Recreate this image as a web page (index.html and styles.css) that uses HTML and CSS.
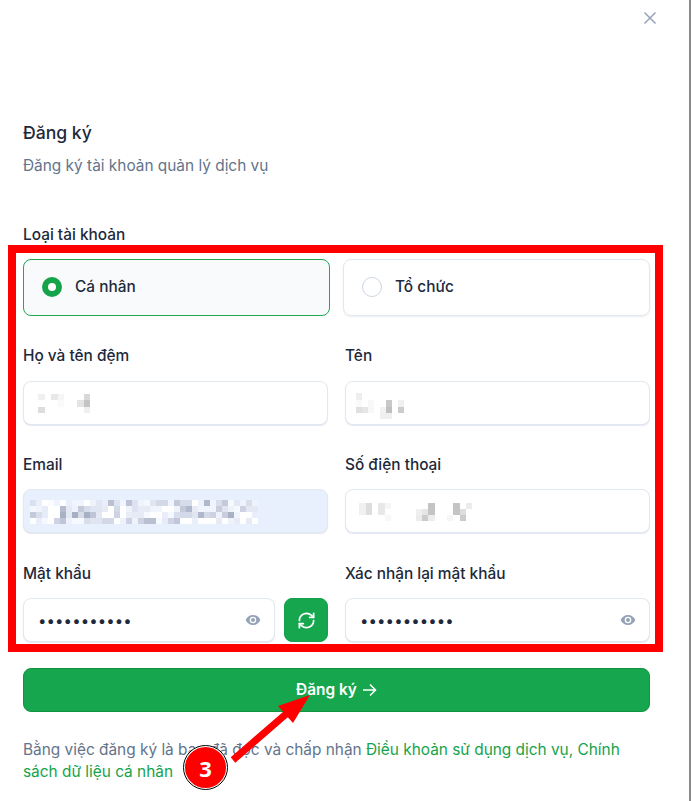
FILE: index.html
```html
<!DOCTYPE html>
<html lang="vi">
<head>
<meta charset="utf-8">
<title>Đăng ký</title>
<link rel="stylesheet" href="styles.css">
</head>
<body>
<main class="sheet">
  <button class="close" type="button" aria-label="Đóng">
    <svg width="16" height="16" viewBox="0 0 16 16"><path d="M2.5 2.500l11 11M13.500 2.500l-11 11" stroke="#94a3b8" stroke-width="1.500" fill="none"/></svg>
  </button>
  <h1 class="title">Đăng ký</h1>
  <p class="subtitle">Đăng ký tài khoản quản lý dịch vụ</p>
  <div class="label type-label">Loại tài khoản</div>
  <div class="choices">
    <div class="choice selected"><span class="radio on"></span>Cá nhân</div>
    <div class="choice"><span class="radio"></span>Tổ chức</div>
  </div>
  <div class="fields">
    <div class="field">
      <div class="label">Họ và tên đệm</div>
      <div class="input">
        <svg class="blur" width="52" height="19" viewBox="0 0 52 19" shape-rendering="crispEdges"><rect x="0" y="0" width="7" height="6" fill="#f0f0f0"/><rect x="13" y="0" width="7" height="6" fill="#e8e8e8"/><rect x="20" y="0" width="6" height="6" fill="#f6f6f6"/><rect x="46" y="0" width="6" height="6" fill="#d8d8d8"/><rect x="20" y="6" width="6" height="7" fill="#fafafa"/><rect x="39" y="6" width="7" height="7" fill="#e4e4e4"/><rect x="46" y="6" width="6" height="7" fill="#c4c4c4"/><rect x="0" y="13" width="7" height="6" fill="#dedede"/><rect x="46" y="13" width="6" height="6" fill="#f0f0f0"/></svg>
      </div>
    </div>
    <div class="field">
      <div class="label">Tên</div>
      <div class="input">
        <svg class="blur blur-name" width="48" height="26" viewBox="0 0 48 26" shape-rendering="crispEdges"><rect x="0" y="0" width="6" height="7" fill="#eeeeee"/><rect x="0" y="7" width="6" height="7" fill="#fafafa"/><rect x="12" y="7" width="6" height="7" fill="#f8f8f8"/><rect x="30" y="7" width="6" height="7" fill="#c8c8c8"/><rect x="42" y="7" width="6" height="7" fill="#f0f0f0"/><rect x="0" y="14" width="6" height="6" fill="#e0e0e0"/><rect x="6" y="14" width="6" height="6" fill="#e6e6e6"/><rect x="12" y="14" width="6" height="6" fill="#f8f8f8"/><rect x="24" y="14" width="6" height="6" fill="#f2f2f2"/><rect x="30" y="14" width="6" height="6" fill="#c0c0c0"/><rect x="42" y="14" width="6" height="6" fill="#cccccc"/><rect x="24" y="20" width="12" height="6" fill="#efefef"/></svg>
      </div>
    </div>
    <div class="field">
      <div class="label">Email</div>
      <div class="input autofill">
        <svg class="blur blur-email" width="228" height="24" viewBox="0 0 228 24" shape-rendering="crispEdges">
          <g><rect x="0" fill="#d9e0ee"/><rect x="6" fill="#eaf0fb"/><rect x="12" fill="#fff"/><rect x="18" fill="#fafcff"/><rect x="24" fill="#eef3fd"/><rect x="30" fill="#fff"/><rect x="36" fill="#e8eefa"/><rect x="42" fill="#f0f4fd"/><rect x="48" fill="#f0f4fd"/><rect x="54" fill="#fff"/><rect x="60" fill="#eef2fb"/><rect x="66" fill="#e0e6f2"/><rect x="72" fill="#e9eefa"/><rect x="78" fill="#b9c0d2"/><rect x="84" fill="#dde3ef"/><rect x="90" fill="#f0f4fd"/><rect x="96" fill="#bcc3d4"/><rect x="102" fill="#dce2ef"/><rect x="108" fill="#eef3fc"/><rect x="114" fill="#f4f7ff"/><rect x="120" fill="#dfe5f1"/><rect x="126" fill="#d3d9e7"/><rect x="132" fill="#d3d9e7"/><rect x="138" fill="#f0f4fd"/><rect x="144" fill="#c4cada"/><rect x="150" fill="#d6dcea"/><rect x="156" fill="#d6dcea"/><rect x="162" fill="#fff"/><rect x="168" fill="#eef2fb"/><rect x="174" fill="#b0b8cc"/><rect x="180" fill="#f0f4fd"/><rect x="186" fill="#d8deeb"/><rect x="192" fill="#c3cada"/><rect x="198" fill="#f6f9ff"/><rect x="204" fill="#e3e8f4"/><rect x="210" fill="#eef2fb"/><rect x="216" fill="#d8deeb"/><rect x="222" fill="#eef2fb"/></g>
          <g transform="translate(0 6)"><rect x="0" fill="#f4f7ff"/><rect x="6" fill="#f0f4fc"/><rect x="12" fill="#e6ecf8"/><rect x="18" fill="#fff"/><rect x="24" fill="#fff"/><rect x="30" fill="#b5bccf"/><rect x="36" fill="#e4e9f5"/><rect x="42" fill="#eef2fc"/><rect x="48" fill="#c4cada"/><rect x="54" fill="#d6dcea"/><rect x="60" fill="#dfe5f1"/><rect x="66" fill="#dfe5f1"/><rect x="72" fill="#e6ebf6"/><rect x="78" fill="#fff"/><rect x="84" fill="#d3d9e7"/><rect x="90" fill="#fff"/><rect x="96" fill="#eef2fb"/><rect x="102" fill="#dde3f0"/><rect x="108" fill="#e6ebf6"/><rect x="114" fill="#e6ebf6"/><rect x="120" fill="#f0f4fd"/><rect x="126" fill="#f0f4fd"/><rect x="132" fill="#fff"/><rect x="138" fill="#fff"/><rect x="144" fill="#eef2fb"/><rect x="150" fill="#c4cada"/><rect x="156" fill="#b0b8cc"/><rect x="162" fill="#e6ebf6"/><rect x="168" fill="#f0f4fd"/><rect x="174" fill="#f0f4fd"/><rect x="180" fill="#f0f4fd"/><rect x="186" fill="#c8cede"/><rect x="192" fill="#e0e5f1"/><rect x="198" fill="#eef2fb"/><rect x="204" fill="#f6f9ff"/><rect x="210" fill="#ccd2e1"/><rect x="216" fill="#e3e8f4"/><rect x="222" fill="#e3e8f4"/></g>
          <g transform="translate(0 12)"><rect x="0" fill="#c4cada"/><rect x="6" fill="#d8deec"/><rect x="12" fill="#e6ecf8"/><rect x="18" fill="#fff"/><rect x="24" fill="#fff"/><rect x="30" fill="#a9b1c5"/><rect x="36" fill="#e4e9f5"/><rect x="42" fill="#a7afc3"/><rect x="48" fill="#d6dcea"/><rect x="54" fill="#a7afc3"/><rect x="60" fill="#bec5d6"/><rect x="66" fill="#e3e8f4"/><rect x="72" fill="#fff"/><rect x="78" fill="#fff"/><rect x="84" fill="#cdd3e2"/><rect x="90" fill="#fff"/><rect x="96" fill="#e7ecf7"/><rect x="102" fill="#e6ebf6"/><rect x="108" fill="#e6ebf6"/><rect x="114" fill="#f6f9ff"/><rect x="120" fill="#fff"/><rect x="126" fill="#fff"/><rect x="132" fill="#e9eefa"/><rect x="138" fill="#f5f8ff"/><rect x="144" fill="#d8deeb"/><rect x="150" fill="#d3d9e7"/><rect x="156" fill="#d3d9e7"/><rect x="162" fill="#e0e5f1"/><rect x="168" fill="#b0b8cc"/><rect x="174" fill="#d3d9e7"/><rect x="180" fill="#ccd2e1"/><rect x="186" fill="#eef2fb"/><rect x="192" fill="#c8cede"/><rect x="198" fill="#a9b1c5"/><rect x="204" fill="#f0f4fd"/><rect x="210" fill="#fff"/><rect x="216" fill="#fff"/><rect x="222" fill="#e9eefa"/></g>
          <g transform="translate(0 18)"><rect x="0" fill="#fff"/><rect x="6" fill="#e9eefa"/><rect x="12" fill="#f5f8ff"/><rect x="18" fill="#fff"/><rect x="24" fill="#ced4e3"/><rect x="30" fill="#bfc6d7"/><rect x="36" fill="#eef2fc"/><rect x="42" fill="#f6f9ff"/><rect x="48" fill="#f6f9ff"/><rect x="54" fill="#d8deeb"/><rect x="60" fill="#e0e5f1"/><rect x="66" fill="#e0e5f1"/><rect x="72" fill="#d3d9e7"/><rect x="78" fill="#d3d9e7"/><rect x="84" fill="#fff"/><rect x="90" fill="#eef2fb"/><rect x="96" fill="#ccd2e1"/><rect x="102" fill="#eef2fb"/><rect x="108" fill="#ccd2e1"/><rect x="114" fill="#b9c0d2"/><rect x="120" fill="#b9c0d2"/><rect x="126" fill="#f6f9ff"/><rect x="132" fill="#e6ebf6"/><rect x="138" fill="#ced4e3"/><rect x="144" fill="#c0c7d8"/><rect x="150" fill="#fff"/><rect x="156" fill="#fff"/><rect x="162" fill="#e9eefa"/><rect x="168" fill="#fff"/><rect x="174" fill="#fff"/><rect x="180" fill="#fff"/><rect x="186" fill="#e6ebf6"/><rect x="192" fill="#fff"/><rect x="198" fill="#eef2fb"/><rect x="204" fill="#e6ebf6"/><rect x="210" fill="#fff"/><rect x="216" fill="#e6ebf6"/><rect x="222" fill="#fff"/></g>
        </svg>
      </div>
    </div>
    <div class="field">
      <div class="label">Số điện thoại</div>
      <div class="input">
        <svg class="blur blur-phone" width="113" height="18" viewBox="0 0 113 18" shape-rendering="crispEdges"><rect x="0" y="0" width="7" height="6" fill="#f0f0f0"/><rect x="7" y="0" width="6" height="6" fill="#dddddd"/><rect x="19" y="0" width="7" height="6" fill="#e8e8e8"/><rect x="26" y="0" width="6" height="6" fill="#f6f6f6"/><rect x="69" y="0" width="7" height="6" fill="#c4c4c4"/><rect x="94" y="0" width="7" height="6" fill="#c4c4c4"/><rect x="107" y="0" width="6" height="6" fill="#ececec"/><rect x="0" y="6" width="7" height="6" fill="#f0f0f0"/><rect x="7" y="6" width="6" height="6" fill="#dddddd"/><rect x="19" y="6" width="7" height="6" fill="#e8e8e8"/><rect x="57" y="6" width="6" height="6" fill="#f0f0f0"/><rect x="63" y="6" width="6" height="6" fill="#e6e6e6"/><rect x="69" y="6" width="7" height="6" fill="#c4c4c4"/><rect x="94" y="6" width="7" height="6" fill="#c4c4c4"/><rect x="101" y="6" width="6" height="6" fill="#dedede"/><rect x="26" y="12" width="6" height="6" fill="#f8f8f8"/><rect x="57" y="12" width="6" height="6" fill="#ececec"/><rect x="63" y="12" width="6" height="6" fill="#cccccc"/><rect x="69" y="12" width="7" height="6" fill="#ededed"/><rect x="88" y="12" width="6" height="6" fill="#f6f6f6"/><rect x="101" y="12" width="6" height="6" fill="#cccccc"/></svg>
      </div>
    </div>
    <div class="field">
      <div class="label">Mật khẩu</div>
      <div class="pw-row">
        <div class="input password">
          <span class="dots">•••••••••••</span>
          <svg class="eye" width="16" height="16" viewBox="0 0 24 24"><path fill="#94a3b8" d="M12 4.500C7 4.500 2.700 7.600 1 12c1.700 4.400 6 7.500 11 7.500s9.300-3.100 11-7.500c-1.700-4.400-6-7.500-11-7.500zM12 17a5 5 0 1 1 0-10 5 5 0 0 1 0 10zm0-8a3 3 0 1 0 0 6 3 3 0 0 0 0-6z"/></svg>
        </div>
        <button class="regen" type="button" aria-label="Tạo mật khẩu">
          <svg width="19" height="19" viewBox="0 0 24 24" fill="none" stroke="#fff" stroke-width="2.200" stroke-linecap="round" stroke-linejoin="round"><path d="M3 12a9 9 0 0 1 15-6.700L21 8"/><path d="M21 3v5h-5"/><path d="M21 12a9 9 0 0 1-15 6.700L3 16"/><path d="M3 21v-5h5"/></svg>
        </button>
      </div>
    </div>
    <div class="field">
      <div class="label">Xác nhận lại mật khẩu</div>
      <div class="input password">
        <span class="dots">•••••••••••</span>
        <svg class="eye" width="16" height="16" viewBox="0 0 24 24"><path fill="#94a3b8" d="M12 4.500C7 4.500 2.700 7.600 1 12c1.700 4.400 6 7.500 11 7.500s9.300-3.100 11-7.500c-1.700-4.400-6-7.500-11-7.500zM12 17a5 5 0 1 1 0-10 5 5 0 0 1 0 10zm0-8a3 3 0 1 0 0 6 3 3 0 0 0 0-6z"/></svg>
      </div>
    </div>
  </div>
  <button class="submit" type="button">Đăng ký <svg class="arrow" width="15" height="14" viewBox="0 0 15 14" fill="none" stroke="#fff" stroke-width="1.500"><path d="M1 7h12.500M8 1.500L13.500 7 8 12.500"/></svg></button>
  <p class="terms">Bằng việc đăng ký là bạn đã đọc và chấp nhận <a href="#">Điều khoản sử dụng dịch vụ, Chính sách dữ liệu cá nhân</a></p>
</main>
<div class="highlight"></div>
<svg class="pointer" width="90" height="80" viewBox="0 0 90 80"><path d="M5.700 67.300L58.200 21.800 53 16 85 5 68 33 62.800 27.200 10.300 72.700z" fill="#f00"/></svg>
<div class="badge">3</div>
<div class="edge"></div>
</body>
</html>
```
FILE: styles.css
```css
* { box-sizing: border-box; }
html, body { margin: 0; height: 100%; }
body {
  position: relative;
  width: 691px;
  height: 801px;
  overflow: hidden;
  background: #fff;
  font-family: Inter, "Liberation Sans", sans-serif;
  font-size: 15.4px;
  color: #1e293b;
}
.sheet { width: 650px; padding: 122px 0 0 23px; }
.close {
  position: absolute; top: 10px; left: 642px;
  padding: 0; border: 0; background: none; line-height: 0;
}
.title { margin: 0; font-size: 17.6px; font-weight: 500; line-height: 22px; color: #1e293b; }
.subtitle { margin: 11px 0 0; line-height: 22px; color: #64748b; }
.label { font-weight: 500; line-height: 21px; color: #1e293b; }
.type-label { margin-top: 47px; }
.choices { display: grid; grid-template-columns: 307px 307px; column-gap: 13px; margin-top: 14px; }
.choice {
  display: flex; align-items: center; gap: 13px;
  height: 57px; padding-left: 18px; padding-bottom: 2px;
  border: 1px solid #e2e8f0; border-radius: 8px;
  box-shadow: 0 1px 2px rgba(15,23,42,.08);
  font-weight: 500;
}
.choice.selected { background: #f8fafc; border-color: #1fa855; box-shadow: none; }
.radio { width: 20px; height: 20px; border-radius: 50%; border: 1px solid #cbd5e1; background: #fff; }
.radio.on { border: 6.500px solid #16a34a; }
.fields { display: grid; grid-template-columns: 305px 305px; column-gap: 17px; row-gap: 29px; margin-top: 29px; }
.field { display: flex; flex-direction: column; gap: 14px; }
.field:nth-child(-n+2) { gap: 15px; }
.field:nth-child(n+5) { margin-top: 1px; }
.input {
  display: flex; align-items: center;
  height: 44px; padding: 0 15px 0 14px;
  background: #fff;
  border: 1px solid #e2e8f0; border-radius: 8px;
  box-shadow: 0 1px 1px rgba(100,116,180,.18);
}
.autofill { background: #e8f0fe; padding-left: 6px; }
.blur { display: block; flex: none; }
.blur-name { margin: 6px 0 0 -4px; }
.blur-email { margin-top: 2px; }
.blur-email rect { width: 6px; height: 6px; }
.blur-phone { margin: 2px 0 0 -1px; }
.password { justify-content: space-between; flex: 1; padding-right: 13px; }
.dots { font-size: 15px; letter-spacing: .1px; color: #1e293b; }
.pw-row { display: flex; gap: 9px; }
.pw-row .input { width: 252px; flex: none; }
.regen {
  display: flex; align-items: center; justify-content: center;
  width: 44px; height: 44px; padding: 0;
  background: #16a74e; border: 1px solid #15a04b; border-radius: 8px;
}
.submit {
  display: flex; align-items: center; justify-content: center; gap: 5px;
  width: 627px; height: 44px; margin-top: 26px;
  background: #16a74e; border: 1px solid #15943f; border-radius: 8px;
  font: 600 15.4px/20px Inter, "Liberation Sans", sans-serif; color: #fff;
}
.terms { margin: 27px 0 0; line-height: 22px; color: #64748b; width: 627px; }
.terms a { color: #16a34a; text-decoration: none; }
.highlight {
  position: absolute; left: 8px; top: 245px; width: 655px; height: 407px;
  border: 8px solid #f00;
}
.pointer { position: absolute; left: 225px; top: 690px; }
.badge {
  position: absolute; left: 183px; top: 745px;
  width: 45px; height: 45px; border-radius: 50%;
  display: flex; align-items: center; justify-content: center;
  background: #f00; border: 2px solid #fff; outline: 1px solid #000; outline-offset: -1px;
  font: 700 22px "Open Sans", sans-serif; color: #fff;
}
.edge { position: absolute; left: 689px; top: 0; width: 2px; height: 801px; background: #8a8a8a; }
```
